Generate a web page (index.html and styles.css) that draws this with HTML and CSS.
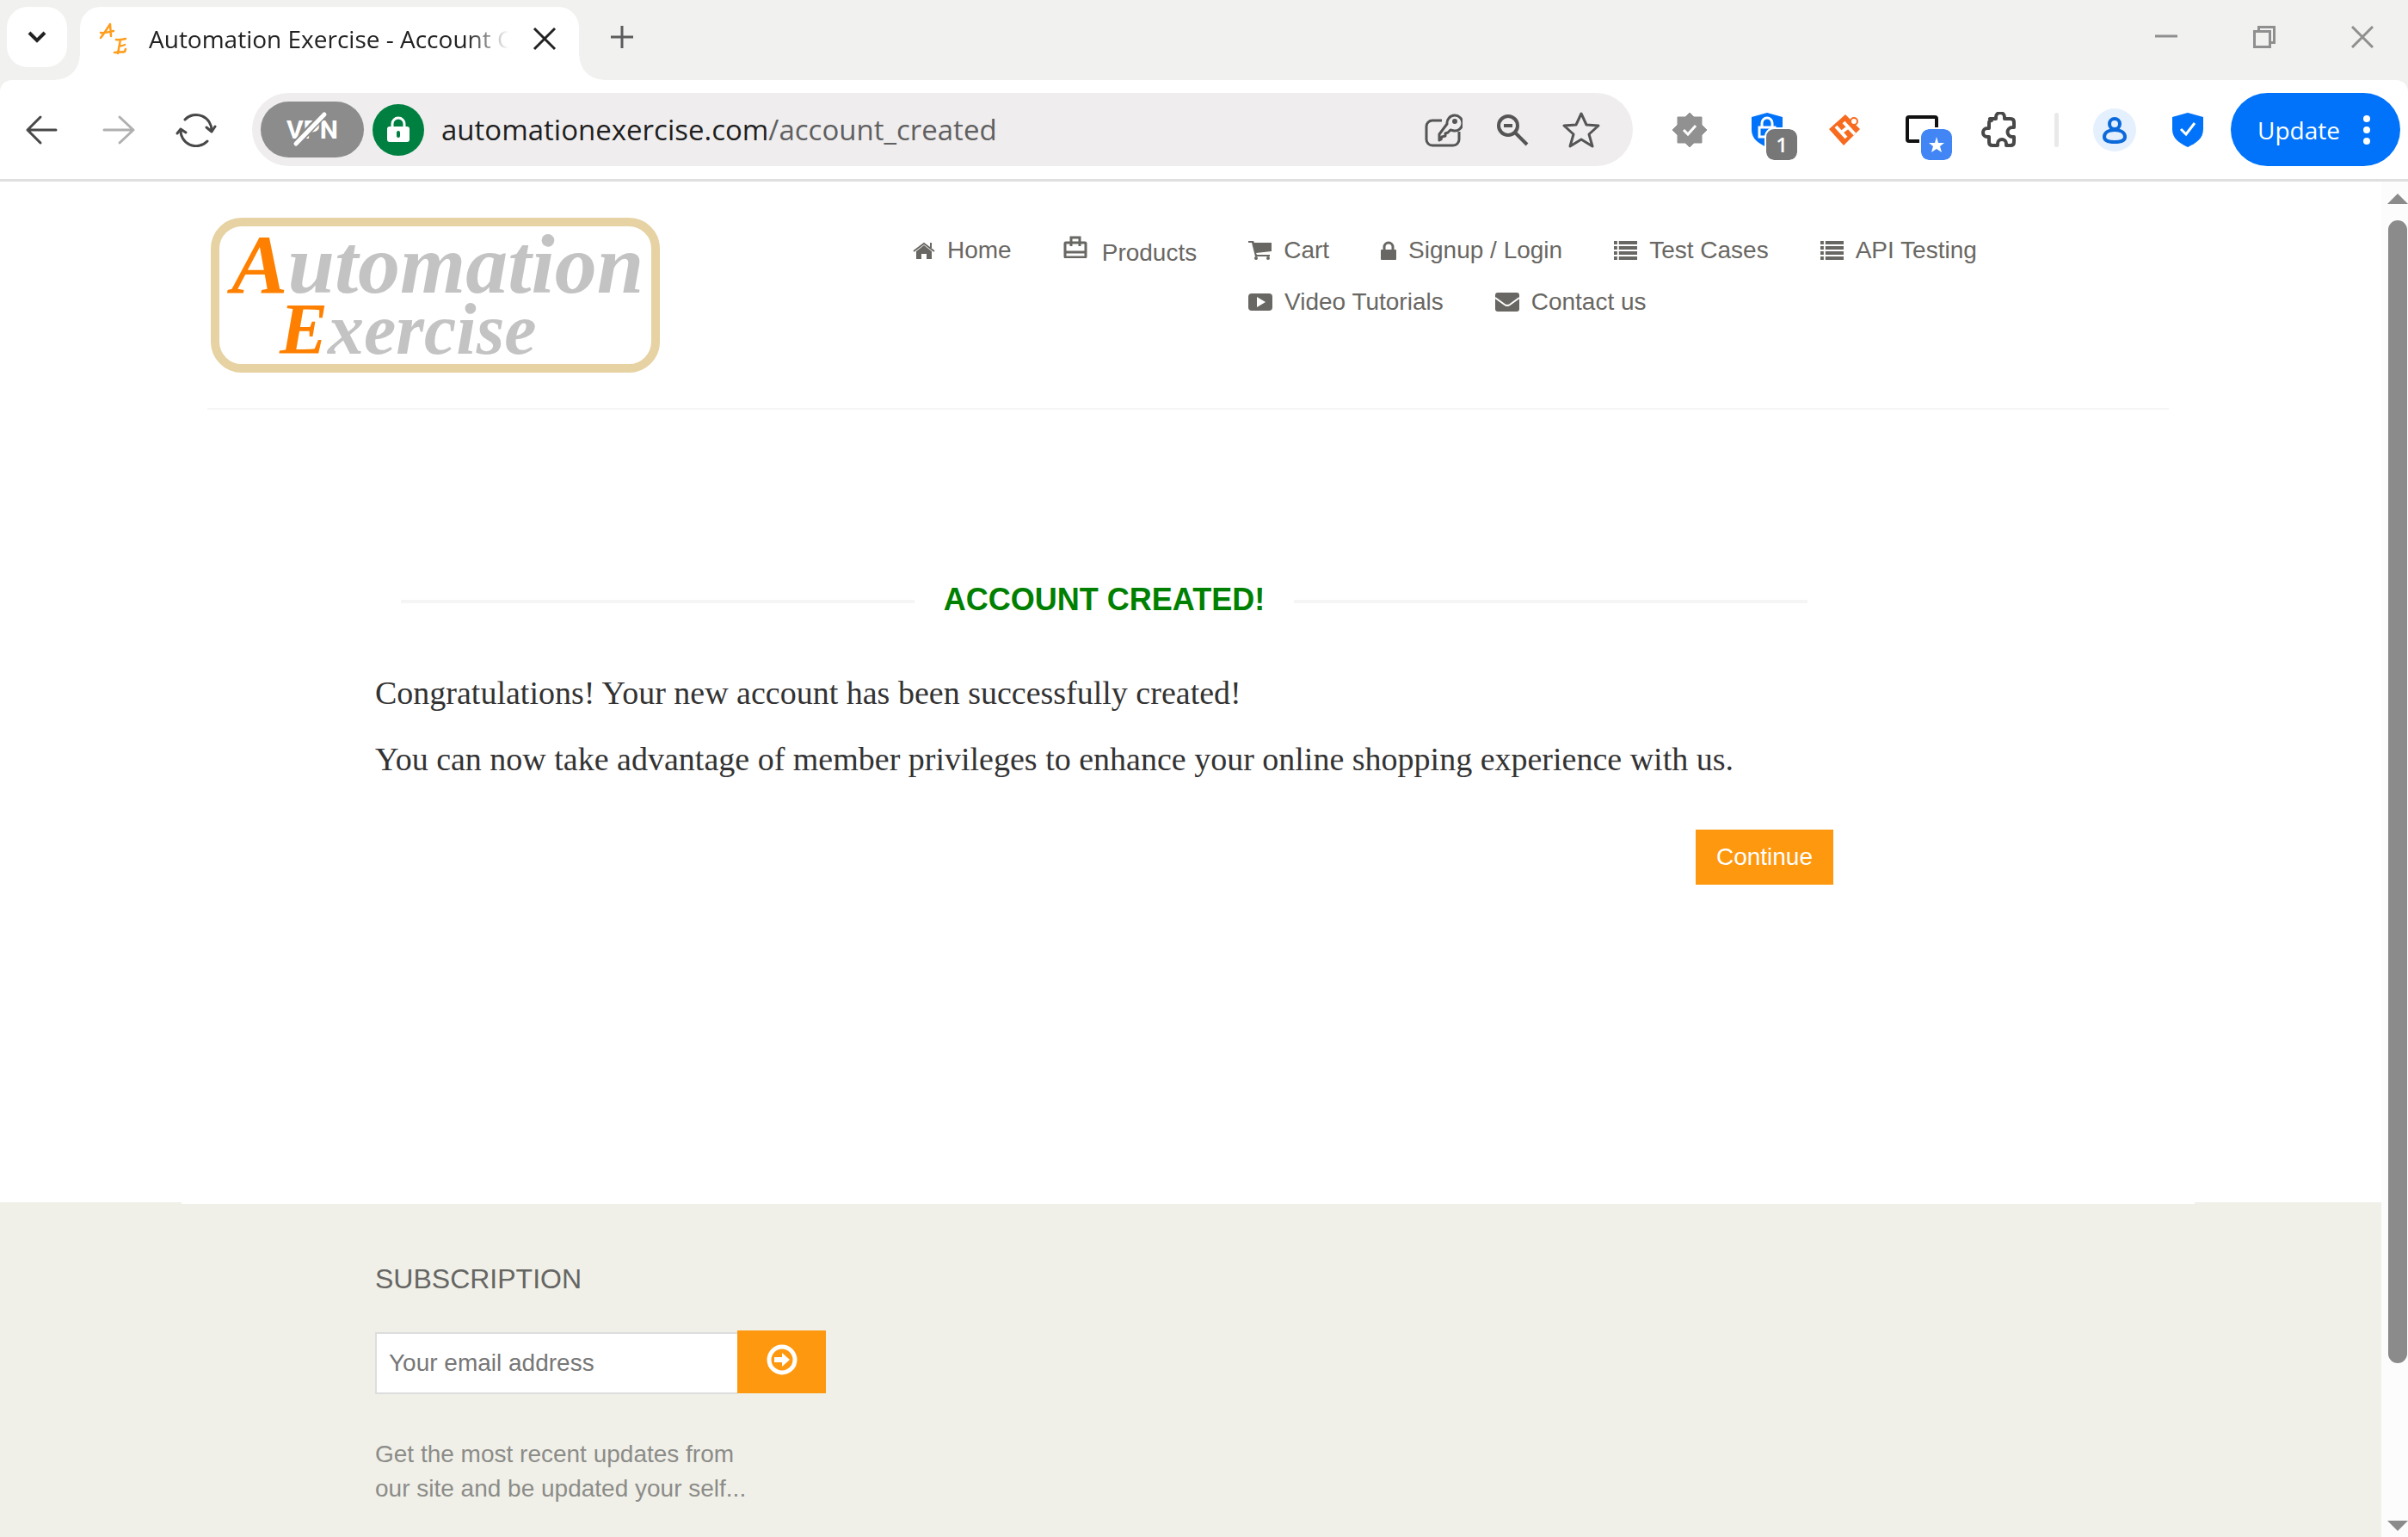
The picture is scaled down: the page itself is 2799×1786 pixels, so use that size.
FILE: index.html
```html
<!DOCTYPE html>
<html lang="en">
<head>
<meta charset="utf-8">
<title>Automation Exercise - Account Created</title>
<link rel="stylesheet" href="styles.css">
</head>
<body>
<header class="browser">
  <div class="tabstrip">
    <button class="tab-search" aria-label="Search tabs">
      <svg width="24" height="16" viewBox="0 0 24 16"><path d="M3 3l9 9 9-9" fill="none" stroke="#222" stroke-width="4"/></svg>
    </button>
    <div class="tab">
      <svg class="favicon" width="36" height="40" viewBox="0 0 36 40" fill="none" stroke="#ff9d1c" stroke-width="2.500" stroke-linecap="round" stroke-linejoin="round"><path d="M2 19c4-5 7-10 11-16l1 14M2 13c5 1 9-1 15-2"/><path d="M20 21c4 1 7 0 11-1M25 21l-3 16M24 28c2 1 4 0 6-1M18 36c4-1 9 0 12-1l1-3"/></svg>
      <span class="tab-title">Automation Exercise - Account Created</span>
      <button class="tab-close" aria-label="Close tab">
        <svg width="28" height="28" viewBox="0 0 28 28"><path d="M2 2l24 24M26 2L2 26" fill="none" stroke="#222" stroke-width="3"/></svg>
      </button>
    </div>
    <button class="new-tab" aria-label="New tab">
      <svg width="28" height="28" viewBox="0 0 28 28"><path d="M14 1v26M1 14h26" fill="none" stroke="#5c5c5c" stroke-width="3"/></svg>
    </button>
    <div class="window-controls">
      <button aria-label="Minimize"><svg width="26" height="26" viewBox="0 0 26 26"><path d="M0 12h26" stroke="#8f8f8f" stroke-width="3"/></svg></button>
      <button aria-label="Restore"><svg width="26" height="26" viewBox="0 0 26 26" fill="none" stroke="#8f8f8f" stroke-width="3"><path d="M1.500 6.500h18v18h-18zM6.500 6V1.500h18v18H20"/></svg></button>
      <button aria-label="Close"><svg width="26" height="26" viewBox="0 0 26 26"><path d="M1 1l24 24M25 1L1 25" stroke="#8f8f8f" stroke-width="3"/></svg></button>
    </div>
  </div>

  <div class="toolbar">
    <div class="history">
      <button aria-label="Back"><svg width="40" height="40" viewBox="0 0 40 40" fill="none" stroke="#484848" stroke-width="3" stroke-linecap="round" stroke-linejoin="round"><path d="M37 20H4M19 5L4 20l15 15"/></svg></button>
      <button aria-label="Forward"><svg width="40" height="40" viewBox="0 0 40 40" fill="none" stroke="#b0b0b0" stroke-width="3" stroke-linecap="round" stroke-linejoin="round"><path d="M3 20h34M21 5l16 15-16 15"/></svg></button>
      <button aria-label="Reload"><svg width="48" height="40" viewBox="0 0 48 40" fill="none" stroke="#484848" stroke-width="3" stroke-linecap="round" stroke-linejoin="round"><path d="M11 8a18 18 0 0 1 31 13M36 17l6 5 4-6M37 33A18 18 0 0 1 6 19M2 24l4-5 6 4"/></svg></button>
    </div>
    <div class="omnibox">
      <button class="vpn" aria-label="VPN is off">VPN<svg class="vpn-slash" width="44" height="44" viewBox="0 0 44 44"><path d="M6 38L38 4" stroke="#8c8c8c" stroke-width="9"/><path d="M5 39L38 5" stroke="#fff" stroke-width="5" stroke-linecap="round"/></svg></button>
      <button class="secure" aria-label="Connection is secure"><svg width="28" height="32" viewBox="0 0 28 32"><path d="M7 14V9a7 7 0 0 1 14 0v5" fill="none" stroke="#fff" stroke-width="3"/><rect x="1" y="12" width="26" height="18" rx="3" fill="#fff"/><path d="M14 19v4" stroke="#008040" stroke-width="4" stroke-linecap="round"/></svg></button>
      <div class="url">automationexercise.com<span class="url-path">/account_created</span></div>
      <div class="page-actions">
        <button aria-label="Passwords"><svg width="44" height="42" viewBox="0 0 44 42" fill="none" stroke="#555" stroke-width="3" stroke-linejoin="round"><path d="M20 10H9a7 7 0 0 0-7 7v15a7 7 0 0 0 7 7h24a7 7 0 0 0 7-7v-9"/><path d="M26 14a9 9 0 1 1 8 8l-4-1-3 3-3 1v3l-4 1-1 3-2 1v-7z"/><circle cx="35" cy="11" r="3" fill="#555" stroke="none"/></svg></button>
        <button aria-label="Zoom"><svg width="38" height="38" viewBox="0 0 38 38" fill="none" stroke="#555" stroke-width="4"><circle cx="14" cy="14" r="11"/><path d="M22 22l14 14M9 14h10"/></svg></button>
        <button aria-label="Bookmark"><svg width="44" height="42" viewBox="0 0 44 42" fill="none" stroke="#555" stroke-width="3" stroke-linejoin="round"><path d="M22 2l6 13 14 1-11 10 4 14-13-8-13 8 4-14L2 16l14-1z"/></svg></button>
      </div>
    </div>
    <div class="extensions">
      <button aria-label="Verified"><svg width="42" height="42" viewBox="0 0 42 42"><path d="M21 1l5 5h9v9l6 6-6 6v9h-9l-5 5-5-5H7v-9l-6-6 6-6V6h9z" fill="#919191" stroke="#919191" stroke-linejoin="round"/><path d="M14 21l5 5 9-10" fill="none" stroke="#fff" stroke-width="3"/></svg></button>
      <button aria-label="Privacy, 1 item"><svg width="38" height="42" viewBox="0 0 38 42"><path d="M19 1l18 5v15c0 10-8 16-18 20C9 37 1 31 1 21V6z" fill="#0073fa"/><path d="M13 17v-4a6 6 0 0 1 12 0v4M10 18h18v11H10z" fill="none" stroke="#fff" stroke-width="3"/></svg><span class="badge badge-count">1</span></button>
      <button aria-label="Highlighter"><svg width="40" height="40" viewBox="0 0 40 40"><path d="M21 2l17 17-19 19L2 19z" fill="#f76b20"/><circle cx="31" cy="10" r="4" fill="#fff" stroke="#f76b20" stroke-width="2"/><path d="M10 16l12 13M19 11l13 14M16 23l8-6" stroke="#fff" stroke-width="4"/></svg></button>
      <button aria-label="Screen capture"><svg width="38" height="42" viewBox="0 0 38 42"><rect x="2" y="6" width="34" height="28" rx="2" fill="#fff" stroke="#111" stroke-width="4"/></svg><span class="badge badge-star"><svg width="20" height="20" viewBox="0 0 20 20"><path d="M10 1l2 7h7l-5 4 2 7-6-4-6 4 2-7-5-4h7z" fill="#fff"/></svg></span></button>
      <button aria-label="Extensions"><svg width="42" height="42" viewBox="0 0 42 42" fill="none" stroke="#484848" stroke-width="4" stroke-linejoin="round"><path d="M10 8h7V6a5 5 0 0 1 10 0v2h7q4 0 4 4v6h-2a5 5 0 0 0 0 11h2v6q0 4-4 4h-5v-2a5 5 0 0 0-10 0v2h-6q-4 0-4-4v-6H7a5 5 0 0 1 0-10h2v-6q0-3 3-3z"/></svg></button>
    </div>
    <span class="separator"></span>
    <button class="profile" aria-label="Profile"><svg width="28" height="32" viewBox="0 0 28 32" fill="none" stroke="#0b69da" stroke-width="4"><circle cx="14" cy="9" r="6"/><path d="M2 24c0-5 5-8 12-8s12 3 12 8c0 4-5 6-12 6S2 28 2 24z"/></svg></button>
    <button class="guard" aria-label="Protection"><svg width="38" height="42" viewBox="0 0 38 42"><path d="M19 1l18 5v14c0 11-8 16-18 21C9 36 1 31 1 20V6z" fill="#0073fa"/><path d="M11 20l6 6 10-13" fill="none" stroke="#fff" stroke-width="3"/></svg></button>
    <button class="update">Update<svg width="10" height="36" viewBox="0 0 10 36" fill="#fff"><circle cx="5" cy="5" r="4"/><circle cx="5" cy="18" r="4"/><circle cx="5" cy="31" r="4"/></svg></button>
  </div>
</header>

<div class="viewport">
  <div class="page">
    <header class="site-header">
      <div class="container">
        <div class="masthead">
          <div class="brand">
            <a class="logo" href="#"><span class="logo-line"><b>A</b>utomation</span><span class="logo-line logo-second"><b>E</b>xercise</span></a>
          </div>
          <nav class="menu">
            <ul>
              <li><a href="#"><svg width="26" height="20" viewBox="0 0 26 20" fill="#696763"><path d="M13 4l9 7v9h-6v-6h-6v6H4v-9z"/><path d="M1 11L13 2l12 9M21 1v6" fill="none" stroke="#696763" stroke-width="2"/></svg>Home</a></li>
              <li><a class="products" href="#"><svg width="28" height="26" viewBox="0 0 28 26" fill="none" stroke="#696763" stroke-width="3"><rect x="2" y="8" width="24" height="17" rx="1"/><path d="M9 12V2h10v10"/><path d="M2 19h24"/></svg><span>Products</span></a></li>
              <li><a href="#"><svg width="27" height="22" viewBox="0 0 27 22" fill="#696763"><path d="M0 0h6l1 2h20v10L9 14l1 2h15v2H8L4 2H0z"/><circle cx="9" cy="20" r="2"/><circle cx="23" cy="20" r="2"/></svg>Cart</a></li>
              <li><a href="#"><svg width="18" height="22" viewBox="0 0 18 22"><rect y="10" width="18" height="12" rx="1" fill="#696763"/><path d="M4 11V7a5 5 0 0 1 10 0v4" fill="none" stroke="#696763" stroke-width="3"/></svg>Signup / Login</a></li>
              <li><a href="#"><svg width="27" height="22" viewBox="0 0 28 22" preserveAspectRatio="none" fill="#696763"><path d="M0 0h4v4H0zM6 0h22v4H6zM0 6h4v4H0zM6 6h22v4H6zM0 12h4v4H0zM6 12h22v4H6zM0 18h4v4H0zM6 18h22v4H6z"/></svg>Test Cases</a></li>
              <li><a href="#"><svg width="27" height="22" viewBox="0 0 28 22" preserveAspectRatio="none" fill="#696763"><path d="M0 0h4v4H0zM6 0h22v4H6zM0 6h4v4H0zM6 6h22v4H6zM0 12h4v4H0zM6 12h22v4H6zM0 18h4v4H0zM6 18h22v4H6z"/></svg>API Testing</a></li>
            </ul>
            <ul class="menu-more">
              <li><a href="#"><svg width="28" height="20" viewBox="0 0 28 20"><rect width="28" height="20" rx="4" fill="#696763"/><path d="M10 4l10 6-10 6z" fill="#fff"/></svg>Video Tutorials</a></li>
              <li><a href="#"><svg width="28" height="22" viewBox="0 0 28 22"><rect width="28" height="22" rx="3" fill="#696763"/><path d="M0 6l11 8q3 2 6 0l11-8" fill="none" stroke="#fff" stroke-width="2"/></svg>Contact us</a></li>
            </ul>
          </nav>
        </div>
      </div>
    </header>

    <main class="content">
      <div class="container">
        <section class="notice">
          <h2>Account Created!</h2>
          <p>Congratulations! Your new account has been successfully created!</p>
          <p>You can now take advantage of member privileges to enhance your online shopping experience with us.</p>
          <div class="actions"><a class="continue" href="#">Continue</a></div>
        </section>
      </div>
    </main>

    <footer class="site-footer">
      <div class="container">
        <form class="subscribe">
          <h2><label for="email">Subscription</label></h2>
          <div class="field">
            <input id="email" type="email" placeholder="Your email address">
            <button type="button" aria-label="Subscribe"><svg width="36" height="36" viewBox="0 0 36 36"><circle cx="18" cy="18" r="15" fill="none" stroke="#fff" stroke-width="5"/><path d="M9 15h9v-5l9 8-9 8v-5H9z" fill="#fff"/></svg></button>
          </div>
          <p>Get the most recent updates from<br>our site and be updated your self...</p>
        </form>
      </div>
    </footer>
  </div>
  <div class="scrollbar" aria-hidden="true">
    <svg width="24" height="12" viewBox="0 0 24 12"><path d="M12 0l12 12H0z" fill="#8b8b8b"/></svg>
    <div class="track"><div class="thumb"></div></div>
    <svg width="24" height="12" viewBox="0 0 24 12"><path d="M0 0h24L12 12z" fill="#8b8b8b"/></svg>
  </div>
</div>
</body>
</html>
```
FILE: styles.css
```css
* {
  box-sizing: border-box;
}

body {
  margin: 0;
  height: 100vh;
  display: flex;
  flex-direction: column;
  overflow: hidden;
  background: #fff;
  font-family: "Liberation Sans", Arial, sans-serif;
  font-size: 28px;
  line-height: 40px;
}

button {
  display: flex;
  align-items: center;
  justify-content: center;
  margin: 0;
  padding: 0;
  border: 0;
  background: none;
  font: inherit;
  cursor: pointer;
}

svg {
  display: block;
  flex: none;
}

h2,
p,
ul {
  margin: 0;
  padding: 0;
}

/* Browser frame */
.browser {
  flex: none;
  background: #f1f1ef;
  font-family: "Open Sans", "Noto Sans", sans-serif;
}

.tabstrip {
  display: flex;
  align-items: flex-start;
  height: 93px;
  padding: 8px 3px 0 8px;
}

.tab-search {
  width: 70px;
  height: 70px;
  border-radius: 24px;
  background: #fff;
}

.tab {
  position: relative;
  display: flex;
  align-items: center;
  width: 580px;
  height: 85px;
  margin-left: 15px;
  padding: 0 26px 12px 22px;
  border-radius: 24px 24px 0 0;
  background: #fff;
}

/* Flared feet where the tab meets the toolbar */
.tab::before,
.tab::after {
  content: "";
  position: absolute;
  bottom: 0;
  width: 28px;
  height: 28px;
}

.tab::before {
  right: 100%;
  background: radial-gradient(circle at 0 0, transparent 27px, #fff 28px);
}

.tab::after {
  left: 100%;
  background: radial-gradient(circle at 100% 0, transparent 27px, #fff 28px);
}

.tab-title {
  flex: 1;
  margin: 0 26px 0 22px;
  overflow: hidden;
  white-space: nowrap;
  color: #222;
  mask-image: linear-gradient(to right, #000 370px, transparent 418px);
}

.new-tab {
  width: 70px;
  height: 70px;
  margin-left: 15px;
}

.window-controls {
  display: flex;
  gap: 14px;
  margin-left: auto;
}

.window-controls button {
  width: 100px;
  height: 70px;
}

.toolbar {
  display: flex;
  align-items: center;
  padding: 15px 9px 15px 18px;
  border-bottom: 3px solid #dfdfdf;
  border-radius: 14px 14px 0 0;
  background: #fff;
}

.history {
  display: flex;
  gap: 30px;
}

.history button,
.page-actions button,
.extensions button,
.guard {
  width: 60px;
  height: 60px;
}

.omnibox {
  flex: 1;
  display: flex;
  align-items: center;
  height: 85px;
  margin: 0 36px 0 35px;
  padding: 0 30px 0 10px;
  border-radius: 43px;
  background: #efedee;
}

.vpn {
  position: relative;
  width: 120px;
  height: 65px;
  border-radius: 33px;
  background: #8c8c8c;
  color: #fff;
  font-family: Roboto, sans-serif;
  font-size: 30px;
  font-weight: 700;
}

.vpn-slash {
  position: absolute;
  top: 10px;
  left: 36px;
}

.secure {
  width: 60px;
  height: 60px;
  margin: 0 20px 0 10px;
  border-radius: 50%;
  background: #008040;
}

.url {
  flex: 1;
  color: #1f1f1f;
  font-size: 33px;
  white-space: nowrap;
}

.url-path {
  color: #606060;
}

.page-actions {
  display: flex;
  gap: 20px;
}

.extensions {
  display: flex;
  gap: 30px;
}

.extensions button {
  position: relative;
}

.badge {
  position: absolute;
  top: 29px;
  left: 29px;
  display: flex;
  align-items: center;
  justify-content: center;
  width: 36px;
  height: 36px;
  border-radius: 9px;
  outline: 2px solid #fff;
  color: #fff;
  font-size: 24px;
  font-weight: 600;
}

.badge-count {
  background: #777;
}

.badge-star {
  background: #4285f4;
}

.separator {
  width: 5px;
  height: 40px;
  margin: 0 40px 0 34px;
  border-radius: 3px;
  background: #e9e9e9;
}

.profile {
  width: 50px;
  height: 50px;
  border-radius: 50%;
  background: #e4f0fe;
}

.guard {
  margin: 0 20px 0 30px;
}

.update {
  gap: 26px;
  width: 197px;
  height: 85px;
  padding-right: 3px;
  border-radius: 43px;
  background: #0073fa;
  color: #fff;
}

/* Web page */
.viewport {
  flex: 1;
  display: flex;
  min-height: 0;
}

.page {
  flex: 1;
  display: flex;
  flex-direction: column;
  overflow-y: auto;
  scrollbar-width: none;
}

.site-header,
.content,
.site-footer {
  padding-right: 6px;
}

.container {
  max-width: 2340px;
  margin: 0 auto;
  padding: 0 30px;
}

.masthead {
  display: flex;
  padding: 42px 0 41px;
  border-bottom: 2px solid #f5f5f5;
}

.brand {
  width: 780px;
  padding-left: 4px;
}

.logo {
  display: block;
  width: 522px;
  height: 180px;
  padding: 6px 0 0 14px;
  border: 10px solid #e6d2a2;
  border-radius: 36px;
  color: #c3c3c3;
  font-family: "Lucida Calligraphy", "Liberation Serif", serif;
  font-size: 98px;
  font-style: italic;
  font-weight: 700;
  line-height: 76px;
  text-decoration: none;
}

.logo b {
  color: #ff8000;
}

.logo-line {
  display: block;
}

.logo-second {
  padding-left: 56px;
  font-size: 84px;
}

.menu {
  flex: 1;
  padding: 18px 0 0 40px;
}

.menu ul {
  display: flex;
  gap: 60px;
  list-style: none;
}

.menu .menu-more {
  padding: 17px 0 0 390px;
}

.menu a {
  display: flex;
  align-items: center;
  gap: 14px;
  color: #696763;
  text-decoration: none;
  white-space: nowrap;
}

.menu .products {
  align-items: flex-start;
  gap: 17px;
  padding-top: 3px;
}

.content {
  padding-bottom: 369px;
}

.notice {
  margin-left: 195px;
  width: 1695px;
  max-width: 100%;
  padding-top: 201px;
}

.notice h2 {
  display: flex;
  align-items: center;
  gap: 34px;
  margin: 0 30px 60px;
  color: #008000;
  font-size: 36px;
  text-transform: uppercase;
}

.notice h2::before,
.notice h2::after {
  content: "";
  flex: 1;
  height: 4px;
  margin-top: 4px;
  background: #f5f5f5;
}

.notice p {
  margin-bottom: 20px;
  color: #333;
  font-family: Garamond, "Liberation Serif", serif;
  font-size: 38px;
  line-height: 57px;
}

.actions {
  display: flex;
  justify-content: flex-end;
  padding-top: 33px;
}

.continue {
  padding: 12px 24px;
  background: #fe980f;
  color: #fff;
  text-decoration: none;
}

.site-footer {
  flex: 1;
  background: #f0f0e9;
}

.site-footer .container {
  border-top: 2px solid #fff;
}

.subscribe {
  width: 524px;
  margin-left: 195px;
  padding: 69px 0 24px;
}

.subscribe h2 {
  margin-bottom: 42px;
  color: #666663;
  font-size: 32px;
  font-weight: 400;
  line-height: 36px;
  text-transform: uppercase;
}

.field {
  display: flex;
}

.field input {
  flex: 1;
  min-width: 0;
  height: 72px;
  margin: 2px 0 0;
  padding: 0 14px;
  border: 2px solid #ddd;
  border-right: 0;
  border-radius: 0;
  background: #fff;
  font: inherit;
}

.field input::placeholder {
  color: #777;
}

.field button {
  width: 103px;
  height: 73px;
  padding-bottom: 6px;
  background: #fe980f;
}

.subscribe p {
  margin-top: 50px;
  color: #8c8c88;
}

/* Page scrollbar */
.scrollbar {
  display: flex;
  flex-direction: column;
  align-items: flex-end;
  width: 31px;
  padding: 14px 0 7px;
  background: #fcfcfc;
}

.track {
  flex: 1;
  width: 22px;
  margin: 19px 1px;
}

.thumb {
  height: 89%;
  border-radius: 11px;
  background: #8b8b8b;
}
```
